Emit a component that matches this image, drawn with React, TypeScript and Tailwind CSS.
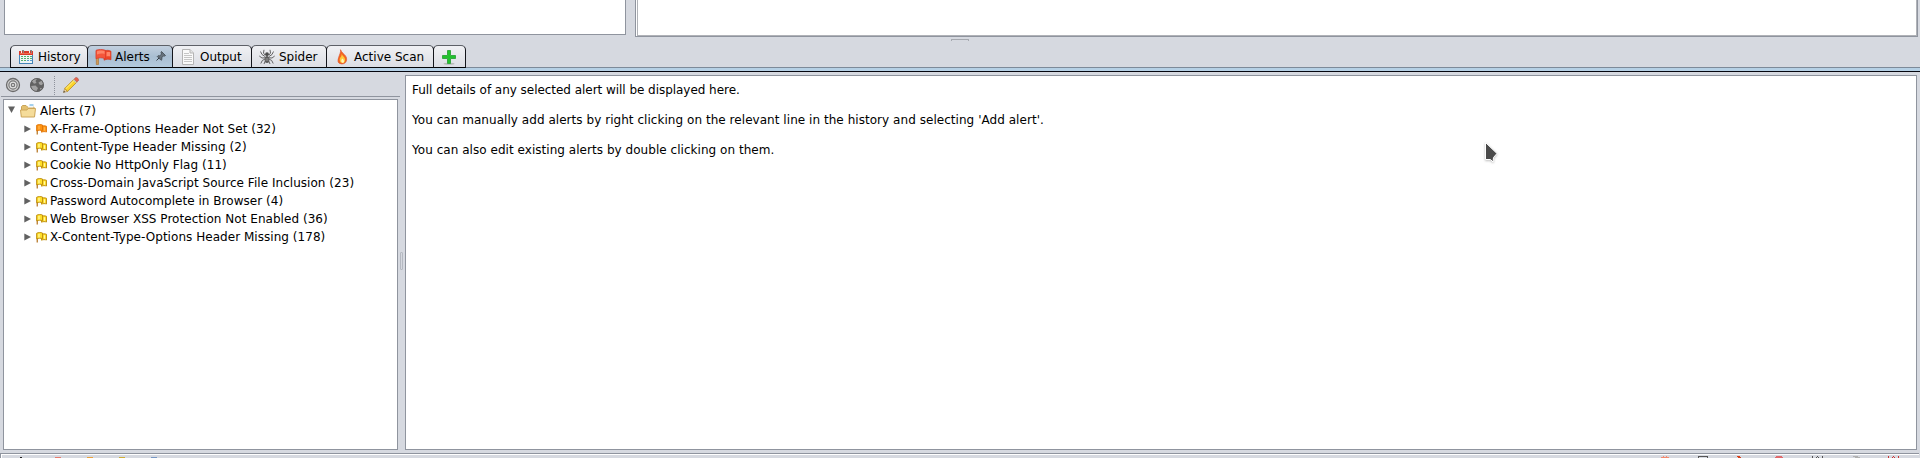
import React from 'react';

const border = 'border-[#8f949e]';

function CalendarIcon() {
  return (
    <svg width="16" height="16" viewBox="0 0 16 16" className="shrink-0" shapeRendering="crispEdges">
      <rect x="1" y="6" width="14" height="9" fill="#4585b8" />
      <rect x="2" y="6" width="12" height="8" fill="#eef5f4" />
      <rect x="1" y="2" width="14" height="4" fill="#d93a2a" />
      <rect x="2" y="4" width="12" height="1" fill="#f26a50" />
      {[7, 9, 11].map((y) =>
        [3, 6, 9, 12].map((x) => <rect key={x + '-' + y} x={x} y={y} width="2" height="1" fill={y === 11 && x > 6 ? '#5a9bd0' : '#55b070'} />),
      )}
      <path d="M3 4V1h2v3M11 4V1h2v3" stroke="#888" fill="none" />
      <rect x="3" y="1" width="1" height="3" fill="#eee" />
      <rect x="11" y="1" width="1" height="3" fill="#eee" />
    </svg>
  );
}

function RedFlagIcon() {
  return (
    <svg width="17" height="16" viewBox="0 0 17 16" className="shrink-0">
      <path d="M1.300 2h2.200v13.500H1.300z" fill="#cf9a55" stroke="#a56f30" strokeWidth=".6" />
      <path d="M9 2.200c2.500-1.200 4.500-1.200 7 0v8.600c-2.500-.9-4.500-.6-7 .4z" fill="#ee4526" stroke="#cf3220" strokeWidth=".6" />
      <path d="M1 1.300C4 .1 7 .1 10.500 1.300v8.400C7 8.500 4 8.500 1 9.700z" fill="#f5563a" stroke="#d8382a" strokeWidth=".7" />
      <path d="M2 2.200C4.500 1.200 7 1.200 9.500 2v3C7 4.300 4.500 4.600 2 5.600zM11.500 3.300c1.300-.4 2.500-.4 3.700 0v4.200c-1.200-.4-2.400-.3-3.700 0z" fill="#ff8568" />
    </svg>
  );
}

function PinIcon() {
  return (
    <svg width="10" height="10" viewBox="0 0 10 10" className="shrink-0">
      <path d="M5.500 .5l4 4-1 .6-.9-.3-1.800 1.900.1 1.900-.8.7-3.800-3.800.8-.8 1.800.2 1.600-1.900-.5-1.500z" fill="#66717b" stroke="#3d464f" strokeWidth=".8" />
      <path d="M3.200 6.800L.5 9.500" stroke="#333b44" strokeWidth="1" />
    </svg>
  );
}

function DocIcon() {
  return (
    <svg width="16" height="16" viewBox="0 0 16 16" className="shrink-0">
      <path d="M2.500.5h7.500l3.500 3.500v11.500h-11z" fill="#fafafa" stroke="#b4b4b4" />
      <path d="M10 .5v3.500h3.500" fill="#e6e6e6" stroke="#b4b4b4" />
      <path d="M4 4.500h5M4 6.500h8M4 8.500h8M4 10.500h8M4 12.500h8" stroke="#c6c6c6" />
    </svg>
  );
}

function SpiderIcon() {
  return (
    <svg width="16" height="16" viewBox="0 0 16 16" className="shrink-0">
      <path d="M6 6L4.500 4 5 .8M10 6l1.500-2L11 .8M6 7.500L3 5.500 1.500 2.500M10 7.500l3-2 1.500-3M6 8.800L3 9 .3 7M10 8.800l3 .2 2.700-2M6 10l-2.700 1.500-1.500 3M10 10l2.700 1.500 1.500 3M6.500 11.500L5 15M9.500 11.500L11 15" stroke="#555" fill="none" strokeWidth=".9" />
      <ellipse cx="8" cy="10.500" rx="2.400" ry="3.500" fill="#5c5c5c" />
      <circle cx="8" cy="5.200" r="1.900" fill="#4c4c4c" />
      <path d="M7.200 9v3M8.800 9v3" stroke="#aaa" strokeWidth=".6" />
    </svg>
  );
}

function FlameIcon() {
  return (
    <svg width="16" height="16" viewBox="0 0 16 16" className="shrink-0">
      <path d="M6.500.7C8 4-.5 14.200 7.500 14.900c5 .4 6.500-5 3.700-8.400C9.800 4.800 7.500 3.500 6.500.7z" fill="#f4661e" stroke="#e0552c" strokeWidth=".7" />
      <path d="M7.500 4.800c.8 2.700-2 3.700-1.800 6.200.1 2 1.300 3 2.800 3s2.900-1.500 2.600-3.500C10.800 8 8.300 7 7.500 4.800z" fill="#ffc93b" />
      <path d="M8.500 9.500c-1.800 1.500-1.500 4 0 4.300s2.300-2 0-4.300z" fill="#fff6bd" />
    </svg>
  );
}

function PlusIcon() {
  return (
    <svg width="16" height="16" viewBox="0 0 16 16" className="shrink-0">
      <ellipse cx="8" cy="14.800" rx="5.500" ry="1" fill="#b7bab8" />
      <path d="M6.500 1.500h3v5h5v3h-5v5h-3v-5h-5v-3h5z" fill="#22c32d" stroke="#36a842" />
    </svg>
  );
}

function TargetIcon() {
  return (
    <svg width="16" height="16" viewBox="0 0 16 16" className="shrink-0">
      <circle cx="8" cy="8" r="6.500" fill="#d2d2d2" stroke="#6b6b6b" strokeWidth="1.300" />
      <circle cx="8" cy="8" r="4.100" fill="#e2e2e2" stroke="#777" strokeWidth="1.200" />
      <circle cx="8" cy="8" r="1.700" fill="#ddd" stroke="#777" strokeWidth="1.200" />
    </svg>
  );
}

function GlobeIcon() {
  return (
    <svg width="16" height="16" viewBox="0 0 16 16" className="shrink-0">
      <circle cx="8" cy="8" r="6.800" fill="#626262" />
      <path d="M3 4.500c1-1.800 3-2.800 5-2.800L6.500 4l1 2L5 6.800 4 5.500zM9.500 5.500l3-1.800 1.700 3-2 1.500-2-1zM2 9l4.500-.5 2.500 2.500-1.500 3C5 14 2.500 12 2 9zM11 11h2l-1.500 2z" fill="#a2a2a2" />
      <circle cx="8" cy="8" r="6.600" fill="none" stroke="#5c5c5c" strokeWidth=".8" />
    </svg>
  );
}

function PencilIcon() {
  return (
    <svg width="16" height="16" viewBox="0 0 16 16" className="shrink-0">
      <path d="M.5 15.500l1.200-4 2.900 2.800z" fill="#efd6a3" stroke="#a47d3d" strokeWidth=".6" />
      <path d="M1.700 11.500L11 2.200l2.900 2.900-9.300 9.200z" fill="#fbd52c" stroke="#b58718" strokeWidth=".8" />
      <path d="M2.800 11.700l8.700-8.600" stroke="#fff08a" />
      <path d="M11 2.200L12.800.5c1-.6 3.300 1.600 2.700 2.900l-1.600 1.700z" fill="#e8624d" stroke="#a9554b" strokeWidth=".6" />
      <path d="M10.500 2.700l2.800 2.900" stroke="#c5c5c5" strokeWidth="1.200" />
      <path d="M.4 15.600l.5-1.800 1.200 1.200z" fill="#333" />
    </svg>
  );
}

function FolderIcon() {
  return (
    <svg width="16" height="14" viewBox="0 0 16 14" className="shrink-0">
      <path d="M1.500 12.500V2.500l1-1H6l1.500 1.500h6.500v9.500z" fill="#e3c06f" stroke="#c9a458" />
      <path d="M8 1.500h5.500v2H8z" fill="#f6f8fa" />
      <path d="M9.500 1h4" stroke="#4da3dc" />
      <path d="M.5 6h6.500l1-1.500h7.500l-1 8.500h-13.200z" fill="#f5dc9a" stroke="#cda65a" />
    </svg>
  );
}

function SmallFlag({ high }: { high?: boolean }) {
  const line = high ? '#df7509' : '#bb8a0b';
  return (
    <svg width="11" height="11" viewBox="0 0 11 11" className="shrink-0">
      <path d="M.6 1.500h1.300V10.500H.6z" fill="#b87a2a" />
      <path d="M5.500 2.300c1.700-.6 3.200-.6 5 0v5.700c-1.800-.6-3.300-.5-5 .2z" fill={high ? '#ff9412' : '#ffd91c'} stroke={line} strokeWidth=".9" />
      <path d="M.7 1.200C2.500.3 4.500.3 6.500 1v5.700C4.800 6 2.500 6 .7 6.900z" fill={high ? '#ff9412' : '#ffe02a'} stroke={line} strokeWidth=".9" />
      <path d="M3 2v3.500M8.500 3.300v3.500" stroke={high ? '#ffb650' : '#fff9a8'} strokeWidth="1.300" />
    </svg>
  );
}

const tabs = [
  { label: 'History', icon: <CalendarIcon />, box: 'w-[78px] pl-[7px] gap-[4px]' },
  { label: 'Alerts', icon: <RedFlagIcon />, box: 'w-[86px] pl-[7px] gap-[3px]', selected: true },
  { label: 'Output', icon: <DocIcon />, box: 'w-[80px] pl-[7px] gap-[4px]' },
  { label: 'Spider', icon: <SpiderIcon />, box: 'w-[76px] pl-[7px] gap-[4px]' },
  { label: 'Active Scan', icon: <FlameIcon />, box: 'w-[108px] pl-[7px] gap-[4px]' },
  { label: '', icon: <PlusIcon />, box: 'w-[33px] pl-[7px]' },
];

const alerts = [
  'X-Frame-Options Header Not Set (32)',
  'Content-Type Header Missing (2)',
  'Cookie No HttpOnly Flag (11)',
  'Cross-Domain JavaScript Source File Inclusion (23)',
  'Password Autocomplete in Browser (4)',
  'Web Browser XSS Protection Not Enabled (36)',
  'X-Content-Type-Options Header Missing (178)',
];

const leftStatus = [
  { color: 'bg-[#222222]', box: 'w-[2px] ml-[19px]' },
  { color: 'bg-[#e97b6d]', box: 'w-[6px] ml-[33px]' },
  { color: 'bg-[#eaa13b]', box: 'w-[6px] ml-[26px]' },
  { color: 'bg-[#cfae35]', box: 'w-[6px] ml-[26px]' },
  { color: 'bg-[#7797c4]', box: 'w-[6px] ml-[26px]' },
];

export default function App() {
  return (
    <div className="relative flex h-[458px] w-[1920px] flex-col overflow-hidden bg-[#d6d9e0] text-[12px] text-black [font-family:'DejaVu_Sans',sans-serif]">
      <div className="flex h-[37px] shrink-0 items-start pl-[4px]">
        <div className={`h-[35px] w-[622px] border border-t-0 bg-white ${border}`} />
        <div className={`ml-[9px] h-[37px] w-[1283px] border border-t-0 bg-white pl-px ${border}`}>
          <div className="h-[36px] border border-t-0 border-[#b0b2b7]" />
        </div>
      </div>
      <div className="flex h-[8px] shrink-0 justify-center pt-[2px]">
        <div className="h-[2px] w-[18px] rounded-t-[1px] border border-b-0 border-[#a5a8af]" />
      </div>

      <div className="flex h-[23px] shrink-0 items-stretch border-b border-[#7d8a99] pl-[10px]">
        {tabs.map((t, i) => (
          <div
            key={i}
            className={`-mr-px -mb-px flex items-center rounded-t-[5px] border border-t-[#5d6067] border-r-[#14161c] border-b-[#050608] border-l-[#14161c] ${t.box} ${
              t.selected ? 'bg-linear-to-b from-[#c3d0df] via-[#a9bed2] to-[#b3cadd]' : 'bg-linear-to-b from-[#f0f1f4] to-[#dcdee4]'
            }`}
          >
            {t.icon}
            {t.label && <span className="whitespace-nowrap leading-[16px]">{t.label}</span>}
            {t.selected && (
              <span className="-mt-[2px] ml-[3px]">
                <PinIcon />
              </span>
            )}
          </div>
        ))}
      </div>
      <div className="h-[4px] shrink-0 border-b border-[#05060f] bg-[#b5d0e5]" />

      <div className="flex h-[381px] shrink-0">
        <div className="flex w-[400px] flex-col pl-px">
          <div className={`flex h-[25px] items-center border-b pt-[2px] pl-[4px] ${border}`}>
            <TargetIcon />
            <span className="w-[8px]" />
            <GlobeIcon />
            <span className="ml-[9px] h-[19px] border-l border-dotted border-[#8d919b]" />
            <span className="w-[8px]" />
            <PencilIcon />
          </div>
          <div className={`mt-[2px] ml-[2px] h-[351px] w-[395px] border bg-white pt-[2px] tracking-[0.04px] ${border}`}>
            <div className="flex h-[18px] items-center pl-[4px]">
              <svg width="8" height="8" viewBox="0 0 8 8" className="-mt-[2px] shrink-0">
                <path d="M0 .5h7L3.500 7z" fill="#616161" />
              </svg>
              <span className="w-[4px]" />
              <FolderIcon />
              <span className="ml-[4px] whitespace-nowrap">Alerts (7)</span>
            </div>
            {alerts.map((a, i) => (
              <div key={a} className="flex h-[18px] items-center pl-[20px]">
                <svg width="7" height="8" viewBox="0 0 7 8" className="shrink-0">
                  <path d="M.3.500v7L7 4z" fill="#616161" />
                </svg>
                <span className="w-[5px]" />
                <SmallFlag high={i === 0} />
                <span className="ml-[3px] whitespace-nowrap">{a}</span>
              </div>
            ))}
          </div>
        </div>
        <div className="flex w-[5px] items-start pt-[180px]">
          <div className="h-[18px] w-[3px] rounded-[1px] border border-[#b5b9c1]" />
        </div>
        <div className={`mt-[3px] h-[375px] w-[1512px] border bg-white pt-[7px] pl-[6px] leading-[15px] ${border}`}>
          <p className="tracking-[-0.04px]">Full details of any selected alert will be displayed here.</p>
          <p className="mt-[15px] tracking-[0.045px]">You can manually add alerts by right clicking on the relevant line in the history and selecting &apos;Add alert&apos;.</p>
          <p className="mt-[15px] tracking-[0.04px]">You can also edit existing alerts by double clicking on them.</p>
        </div>
      </div>

      <div className={`flex h-[5px] w-[1919px] shrink-0 items-end justify-between border-t border-l bg-[#d6d9e0] shadow-[inset_1px_1px_0_#fff] ${border}`}>
        <div className="flex">
          {leftStatus.map((s) => (
            <span key={s.color} className={`h-px ${s.color} ${s.box}`} />
          ))}
        </div>
        <svg width="258" height="2" viewBox="1661 456 258 2" shapeRendering="crispEdges">
          <path d="M1661 457.500h8M1663 456.500h1M1666 456.500h1" stroke="#f28a70" />
          <path d="M1698 456.500h10M1698 457.500h1M1707 457.500h1" stroke="#555" />
          <path d="M1737 456.500h3M1738 457.500h3" stroke="#d8411a" />
          <path d="M1776 456.500h6M1775 457.500h8" stroke="#e06a6d" />
          <path d="M1812.500 456v2M1822.500 456v2M1816.500 457v1M1818.500 457v1M1817 456.500h1" stroke="#555" />
          <path d="M1853 456.500h5M1855 457.500h5" stroke="#b0b0b0" />
          <path d="M1888.500 456v2M1898.500 456v2M1892.500 457v1M1894.500 457v1M1893 456.500h1" stroke="#c33" />
        </svg>
      </div>

      <svg className="absolute top-[141px] left-[1484px] drop-shadow-[0_1px_1px_rgba(0,0,0,0.25)]" width="16" height="24" viewBox="0 0 16 24">
        <path d="M1.500 1.500v17h5l2.500 2.500.5-4.500 3.500-4z" fill="#4b4b4b" stroke="#fff" strokeWidth="1" />
      </svg>
    </div>
  );
}
